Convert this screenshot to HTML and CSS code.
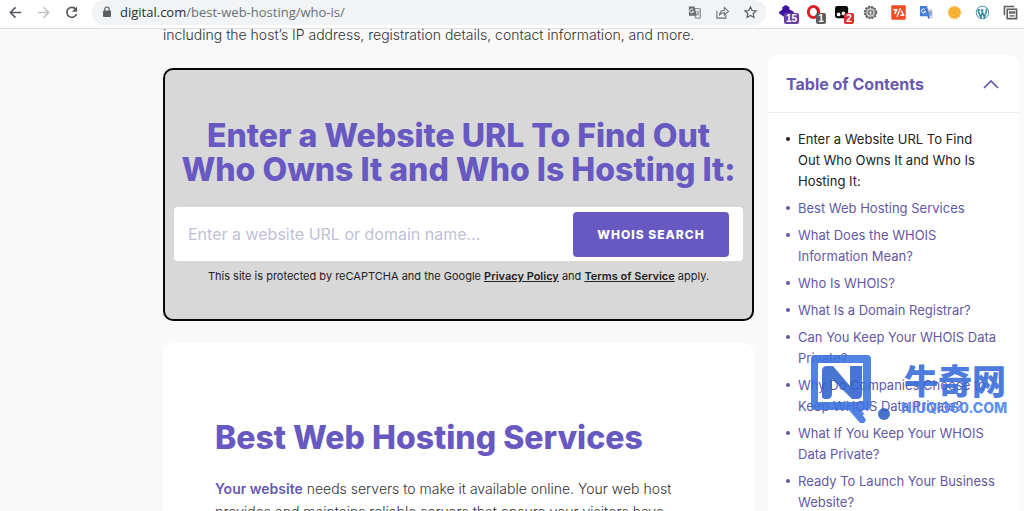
FILE: index.html
```html
<!DOCTYPE html>
<html lang="en">
<head>
<meta charset="utf-8">
<title>WHOIS Lookup</title>
<link rel="stylesheet" href="styles.css">
</head>
<body>
<div class="browser">
  <header class="toolbar">
    <nav class="nav-buttons" aria-label="Navigation">
      <button class="icon-btn" aria-label="Back"><svg viewBox="0 0 16 16"><path d="M14 8H3M8 2.500 2.500 8 8 13.500" fill="none" stroke="#55585c" stroke-width="1.700"/></svg></button>
      <button class="icon-btn" aria-label="Forward"><svg viewBox="0 0 16 16"><path d="M2 8h11M8 2.500 13.500 8 8 13.500" fill="none" stroke="#bcbec1" stroke-width="1.500"/></svg></button>
      <button class="icon-btn" aria-label="Reload"><svg viewBox="0 0 16 16"><path d="M12.600 4.600A5.300 5.300 0 1 0 13.400 9.500" fill="none" stroke="#55585c" stroke-width="1.800"/><path d="M14 1.500v5.700H8.300z" fill="#55585c"/></svg></button>
    </nav>
    <div class="address">
      <svg class="lock" viewBox="0 0 10 12"><rect x="1" y="4.500" width="8" height="6.500" rx="1" fill="#5a5d61"/><path d="M2.800 5V3.200a2.200 2.200 0 0 1 4.400 0V5" fill="none" stroke="#5a5d61" stroke-width="1.200"/></svg>
      <span class="url"><span class="host">digital.com</span>/best-web-hosting/who-is/</span>
      <div class="address-actions">
        <button class="icon-btn" aria-label="Translate"><svg viewBox="0 0 16 16"><path d="M7 4h7.200v10H9z" fill="#f5f6f8" stroke="#74777b"/><path d="M2 1.500h6l2.500 10H2z" fill="#696c70"/><path d="M6.800 5.100A2.100 2.100 0 1 0 7 7H5.200" fill="none" stroke="#fff"/><path d="M9.800 7.300h3.600M11.500 6.300v1M12.900 7.500c-.4 1.700-1.500 2.900-2.500 3.500M10.300 8.500c.6 1.100 1.600 2 2.800 2.600" fill="none" stroke="#74777b" stroke-width=".8"/></svg></button>
        <button class="icon-btn" aria-label="Share"><svg viewBox="0 0 16 16"><path d="M2 6v8h9.500v-3M4.800 10.500c.4-3.400 2.400-5 5.200-5V2.600l4.400 4.200-4.400 4V8.200c-2.200 0-3.800.6-5.200 2.300z" fill="none" stroke="#686b6f" stroke-width="1.100"/></svg></button>
        <button class="icon-btn" aria-label="Bookmark"><svg viewBox="0 0 16 16"><path d="m8 2 1.700 3.900 4.300.4-3.200 2.800.9 4.200L8 11.100l-3.700 2.200.9-4.200L2 6.300l4.300-.4z" fill="none" stroke="#56595d" stroke-width="1.200"/></svg></button>
      </div>
    </div>
    <div class="extensions">
      <button class="icon-btn" aria-label="Layers, 15"><svg viewBox="0 0 16 16"><path d="m7 0 4 2v2.500l5 3L8 14 0 7.500 3.500 5V2.500z" fill="#3d12a0"/><path d="m0 7.500 8 4 8-4v1.500l-8 5.500L0 9z" fill="#4a1bb4"/></svg><span class="badge badge-purple">15</span></button>
      <button class="icon-btn" aria-label="Opera, 1"><svg viewBox="0 0 16 16"><ellipse cx="7" cy="7.500" rx="5.500" ry="5.900" fill="none" stroke="#e02027" stroke-width="3.200"/><path d="M9 3.500c3 1 3 7 0 8" fill="none" stroke="#a70e13" stroke-width="1.200"/></svg><span class="badge badge-grey">1</span></button>
      <button class="icon-btn" aria-label="Monkey, 2"><svg viewBox="0 0 16 16"><rect x="0" y="1" width="14" height="13" rx="2.500" fill="#080808"/><circle cx="3.800" cy="10" r="2" fill="#fff"/><circle cx="9" cy="9" r="2" fill="#fff"/></svg><span class="badge badge-red">2</span></button>
      <button class="icon-btn" aria-label="Settings"><svg viewBox="0 0 16 16"><circle cx="8" cy="8" r="6.300" fill="#858585" stroke="#626262" stroke-width="1.800" stroke-dasharray="2 1.300"/><circle cx="8" cy="8" r="3.900" fill="none" stroke="#e7e7e7"/><circle cx="8" cy="8" r="1.800" fill="#f0f0f0" stroke="#5b5b5b"/><path d="M8 9.500 6 13M8 9.500l3 3M8 6V3" stroke="#ddd" stroke-width=".8"/></svg></button>
      <button class="icon-btn" aria-label="Code tool"><svg viewBox="0 0 16 16"><rect x=".3" y=".3" width="15.400" height="15.400" rx="1" fill="#ee4d24"/><path d="M2.500 5H6L4 9.500M11 6l2.500 5H10M10 3.500 6.300 12.500" fill="none" stroke="#fff" stroke-width="1.500"/></svg></button>
      <button class="icon-btn" aria-label="Google Translate"><svg viewBox="0 0 16 16"><path d="M7 4h7.500v11H9.800z" fill="#d7dce3"/><path d="M1 1h7.500l3 11H1z" fill="#467ddc"/><path d="M9 12h2.500L10 15z" fill="#2456aa"/><path d="M6.500 4.900A2.200 2.200 0 1 0 7 7H5" fill="none" stroke="#fff"/><path d="M10.500 7.500H14M12.300 6.500v1M13.500 8c-.5 1.500-1.400 2.500-2.300 3.100M11 8.500l2.600 3" fill="none" stroke="#5674a5" stroke-width=".8"/></svg></button>
      <button class="icon-btn" aria-label="Sun"><svg viewBox="0 0 16 16"><circle cx="8" cy="8" r="6.500" fill="#f7ae2c" stroke="#f9c35c" stroke-width="1.800" stroke-dasharray="2 1.200"/><circle cx="8" cy="8" r="3.200" fill="none" stroke="#fbc561" stroke-dasharray="1 1"/></svg></button>
      <button class="icon-btn" aria-label="WordPress"><svg viewBox="0 0 16 16"><circle cx="8" cy="8" r="6.700" fill="#fff" stroke="#358aa2" stroke-width="1"/><path d="M3.100 5.500 6.200 13 8 7.800 10 13l2.300-6.500c.3-1-.1-1.800-.8-2.400M7.200 5.500 8 7.800M2.800 5.300h2.500M6 5.300h3" fill="none" stroke="#358aa2" stroke-width="1.700"/></svg></button>
      <button class="icon-btn" aria-label="Tab list"><svg viewBox="0 0 16 16"><path d="M1.500 11V1.500H12" fill="none" stroke="#5d5d5d" stroke-width="1.600"/><path d="M4.500 4.500h10v10h-10z" fill="#fff" stroke="#5d5d5d" stroke-width="1.700"/><path d="M7 7.300h5.500v1.500H7zM7 11.500h5.500" fill="none" stroke="#5d5d5d" stroke-width="1.300"/></svg></button>
    </div>
  </header>

  <div class="page">
    <main class="content">
      <p class="intro">including the host’s IP address, registration details, contact information, and more.</p>
      <section class="lookup">
        <h2 class="title lookup-title">Enter a Website URL To Find Out Who Owns It and Who Is Hosting It:</h2>
        <form class="search">
          <input class="search-input" type="text" aria-label="Website URL or domain name" placeholder="Enter a website URL or domain name...">
          <button class="search-btn" type="button">WHOIS SEARCH</button>
        </form>
        <p class="legal">This site is protected by reCAPTCHA and the Google <a href="#">Privacy Policy</a> and <a href="#">Terms of Service</a> apply.</p>
      </section>
      <article class="card">
        <h2 class="title">Best Web Hosting Services</h2>
        <p class="copy"><a href="#">Your website</a> needs servers to make it available online. Your web host provides and maintains reliable servers that ensure your visitors have</p>
      </article>
    </main>

    <aside class="toc">
      <div class="toc-head">
        <h3 class="toc-title">Table of Contents</h3>
        <button class="toc-toggle" aria-label="Collapse"><svg viewBox="0 0 16 10"><path d="m1 9 7-7 7 7" fill="none" stroke="#6558a8" stroke-width="1.700"/></svg></button>
      </div>
      <ul class="toc-list">
        <li class="current"><a href="#">Enter a Website URL To Find Out Who Owns It and Who Is Hosting It:</a></li>
        <li><a href="#">Best Web Hosting Services</a></li>
        <li><a href="#">What Does the WHOIS Information Mean?</a></li>
        <li><a href="#">Who Is WHOIS?</a></li>
        <li><a href="#">What Is a Domain Registrar?</a></li>
        <li><a href="#">Can You Keep Your WHOIS Data Private?</a></li>
        <li><a href="#">Why Do Companies Choose to Keep WHOIS Data Private?</a></li>
        <li><a href="#">What If You Keep Your WHOIS Data Private?</a></li>
        <li><a href="#">Ready To Launch Your Business Website?</a></li>
      </ul>
    </aside>
  </div>

  <div class="watermark">
    <svg class="watermark-logo" viewBox="0 0 82 68"><path fill-rule="evenodd" d="M5 0h52q4 0 4 4v47q0 4-4 4h-5L43 55 35 47H53V8H8v39h27l6 8H5q-4 0-4-4V4q0-4 4-4z" fill="#3b72e0"/><path d="M12 42V16q0-5 5-5h6l17 20V11h12v28q0 5-5 5h-5L22 24v15q0 5-5 5t-5-2z" fill="#2f62cc"/><path d="m40 51 12 14" stroke="#3b72e0" stroke-width="7" stroke-linecap="round"/><path d="m47 55 5 6" stroke="#3b72e0" stroke-width="6"/><circle cx="74" cy="59" r="6" fill="#315fc5"/></svg>
    <div class="watermark-text">
      <span class="watermark-name" lang="zh">牛奇网</span>
      <span class="watermark-site">NIUQI360.COM</span>
    </div>
  </div>
</div>
</body>
</html>
```
FILE: styles.css
```css
* { box-sizing: border-box; }
body { margin: 0; font-family: Inter, "Liberation Sans", sans-serif; background: #f9f9fa; color: #222; }
h2, h3, p, ul { margin: 0; }
button { font: inherit; border: 0; padding: 0; background: none; cursor: pointer; }
a { color: inherit; }
.browser { position: relative; height: 100vh; overflow: hidden; display: flex; flex-direction: column; }

.toolbar { flex: none; display: flex; align-items: center; height: 29px; border-bottom: 1px solid #dedfe1; background: #fff; }
.nav-buttons { display: flex; gap: 13px; padding: 0 13px 4px 8px; }
.icon-btn { position: relative; width: 15px; height: 15px; flex: none; }
.icon-btn svg { display: block; width: 100%; height: 100%; }
.address { flex: 1; display: flex; align-items: center; height: 25px; margin-bottom: 4px; padding: 0 8px 0 10px; border-radius: 12px; background: #f1f3f5; }
.lock { width: 10px; height: 12px; margin-right: 8px; }
.url { flex: 1; font: 13px/20px "Open Sans", "Liberation Sans", sans-serif; color: #6b6f74; }
.host { color: #2b2d30; }
.address-actions { display: flex; gap: 13px; }
.extensions { display: flex; gap: 13px; padding: 0 6px 4px 13px; }
.badge { position: absolute; left: 5px; top: 8px; min-width: 10px; height: 11px; padding: 0 2px; border-radius: 2px; color: #fff; font: bold 10px/11px "Liberation Sans", sans-serif; }
.badge-purple { background: #6a3fa8; }
.badge-grey { left: 9px; background: #5d5d5d; }
.badge-red { left: 9px; background: #d9302f; }

.page { flex: 1; min-height: 0; display: grid; grid-template-columns: minmax(0, 1fr) 251px; gap: 14px; padding: 0 5px 0 163px; }
.intro, .copy { font-size: 14px; line-height: 23px; font-weight: 300; color: #333; }
.intro { padding-bottom: 27px; line-height: 12px; white-space: nowrap; }
.lookup { padding: 49px 8px 35px; border: 2px solid #080808; border-radius: 10px; background: #d8d8d8; }
.title { font-size: 32px; line-height: 34px; font-weight: 800; color: #6759c1; }
.lookup-title { text-align: center; }
.search { display: flex; align-items: center; height: 54px; margin: 20px 1px 0; padding: 4px 14px; border-radius: 4px; background: #fff; }
.search-input { flex: 1; min-width: 0; border: 0; padding: 0; outline: 0; background: none; font: 16px/24px Inter, sans-serif; }
.search-input::placeholder { color: #c2bfd6; opacity: 1; }
.search-btn { width: 156px; height: 45px; border-radius: 4px; background: #6759c1; color: #fff; font-size: 12px; font-weight: 800; letter-spacing: 1px; }
.legal { margin-top: 7px; text-align: center; font-size: 11px; line-height: 16px; }
.legal a { font-weight: 600; }
.card { min-height: 400px; margin-top: 22px; padding: 78px 52px 0; border-radius: 10px; background: #fff; }
.copy { margin-top: 22px; }
.copy a { color: #6759b0; font-weight: 600; text-decoration: none; }

.toc { margin-top: 26px; min-height: 480px; border-radius: 10px; background: #fff; }
.toc-head { display: flex; align-items: center; justify-content: space-between; height: 58px; padding: 0 20px 0 18px; border-bottom: 1px solid #ececf0; }
.toc-title { font-size: 16px; line-height: 24px; font-weight: 700; color: #6759b0; }
.toc-toggle { width: 16px; height: 10px; }
.toc-toggle svg { display: block; }
.toc-list { display: flex; flex-direction: column; gap: 6px; padding: 16px 22px 0 18px; font-size: 13px; line-height: 21px; color: #6258a5; list-style: none; }
.toc-list li { display: flex; gap: 8px; }
.toc-list li::before { content: ""; flex: none; width: 4px; height: 4px; margin-top: 8px; border-radius: 50%; background: currentColor; }
.toc-list a { text-decoration: none; }
.toc-list .current { color: #222; }

.watermark { position: absolute; left: 810px; top: 355px; display: flex; gap: 9px; opacity: .88; pointer-events: none; }
.watermark-logo { width: 82px; height: 68px; }
.watermark-text { display: flex; flex-direction: column; color: #356bda; }
.watermark-name { font: 900 34px/36px "Noto Sans CJK SC", sans-serif; padding: 7px 0 0 3px; }
.watermark-site { font: 800 14px/20px Inter, sans-serif; color: #4b83ef; }
```
